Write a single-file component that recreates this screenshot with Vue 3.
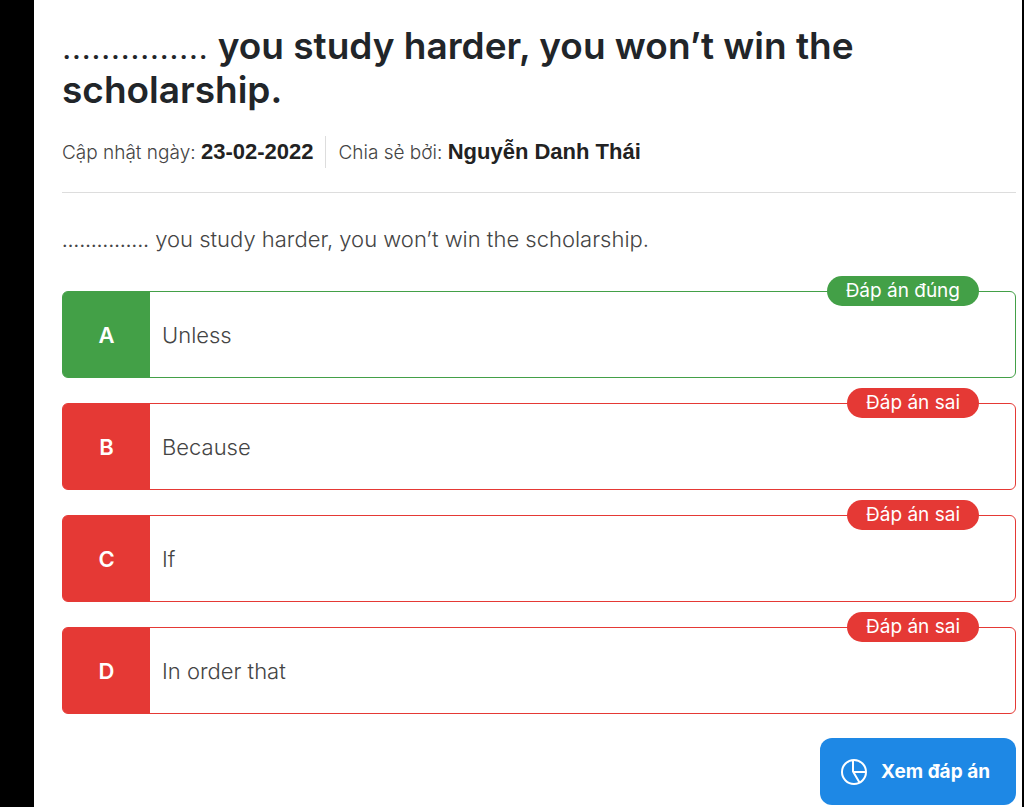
<script setup>
const answers = [
  { letter: 'A', text: 'Unless', correct: true },
  { letter: 'B', text: 'Because', correct: false },
  { letter: 'C', text: 'If', correct: false },
  { letter: 'D', text: 'In order that', correct: false },
]
</script>

<template>
  <main class="page">
    <h1 class="title"><span class="blank">...............</span> you study harder, you won’t win the scholarship.</h1>
    <div class="meta">
      <p class="meta-item">Cập nhật ngày: <strong>23-02-2022</strong></p>
      <p class="meta-item">Chia sẻ bởi: <strong>Nguyễn Danh Thái</strong></p>
    </div>
    <p class="question"><span class="blank">...............</span> you study harder, you won’t win the scholarship.</p>
    <ul class="answers">
      <li v-for="a in answers" :key="a.letter" class="answer" :class="{ correct: a.correct }">
        <span class="letter">{{ a.letter }}</span>
        <span class="text">{{ a.text }}</span>
        <span class="badge">{{ a.correct ? 'Đáp án đúng' : 'Đáp án sai' }}</span>
      </li>
    </ul>
    <div class="actions">
      <button type="button" class="show">
        <svg class="icon" viewBox="0 0 28 28" aria-hidden="true">
          <circle cx="14" cy="14" r="12" />
          <path d="M13 2V13.500L19.500 24.500M13 14H26" />
        </svg>
        Xem đáp án
      </button>
    </div>
  </main>
</template>

<style>
body {
  background: #fff;
}
</style>

<style scoped>
.page {
  box-sizing: border-box;
  min-height: 100vh;
  border-left: 34px solid #000;
  border-right: 2px solid #000;
  padding: 24px 6px 2px 28px;
  font-family: Inter, "Liberation Sans", sans-serif;
  color: #444;
}
.title {
  margin: 0;
  font-size: 37px;
  line-height: 44px;
  font-weight: 600;
  color: #212529;
}
.blank {
  font-family: Roboto, sans-serif;
  font-weight: 400;
  line-height: 1;
}
.meta {
  display: flex;
  margin-top: 24px;
  padding-bottom: 24px;
  border-bottom: 1px solid #ddd;
}
.meta-item {
  margin: 0;
  font-size: 19px;
  line-height: 31px;
  font-weight: 300;
}
.meta-item + .meta-item {
  margin-left: 12px;
  padding-left: 12px;
  border-left: 1px solid #ddd;
}
.meta-item strong {
  font-family: "Liberation Sans", sans-serif;
  font-size: 22px;
  font-weight: 700;
  color: #222;
}
.question {
  margin: 30px 0 0;
  font-size: 22px;
  line-height: 32px;
  font-weight: 300;
}
.answers {
  list-style: none;
  margin: 36px 0 0;
  padding: 0;
  display: grid;
  gap: 25px;
}
.answer {
  --tone: #e53935;
  position: relative;
  display: flex;
  min-height: 85px;
  border: 1px solid var(--tone);
  border-radius: 6px;
}
.answer.correct {
  --tone: #43a047;
}
.letter {
  display: grid;
  place-items: center;
  width: 87px;
  border-radius: 4px 0 0 4px;
  background: var(--tone);
  color: #fff;
  font-size: 22px;
  font-weight: 600;
}
.text {
  align-self: center;
  padding-left: 12px;
  font-size: 22px;
  line-height: 32px;
  font-weight: 300;
}
.badge {
  position: absolute;
  top: -16px;
  right: 36px;
  padding: 0 19px;
  border-radius: 16px;
  background: var(--tone);
  color: #fff;
  font-size: 19px;
  line-height: 30px;
}
.actions {
  display: flex;
  justify-content: flex-end;
  margin-top: 24px;
}
.show {
  display: flex;
  align-items: center;
  gap: 13px;
  height: 67px;
  padding: 0 26px 0 20px;
  border: 0;
  border-radius: 12px;
  background: #1e88e5;
  color: #fff;
  font-family: inherit;
  font-size: 19px;
  font-weight: 700;
}
.icon {
  width: 28px;
  height: 28px;
  fill: none;
  stroke: #fff;
  stroke-width: 2;
}
</style>
